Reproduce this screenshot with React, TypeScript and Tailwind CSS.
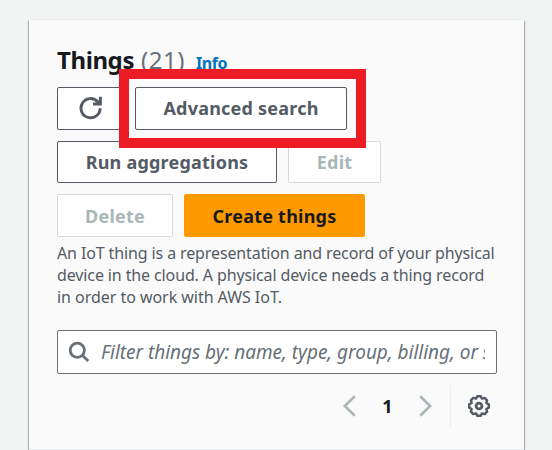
import type { ReactNode } from "react";

function Button({ className, children }: { className: string; children: ReactNode }) {
  return (
    <button
      className={`flex shrink-0 items-center justify-center whitespace-nowrap rounded-[2px] border text-[18px] font-bold leading-[22px] tracking-[0.22px] ${className}`}
    >
      {children}
    </button>
  );
}

const normal = "border-[#545b64] bg-white text-[#545b64]";
const disabled = "border-[#d5dbdb] bg-white text-[#aab7b8]";

export default function App() {
  return (
    <div className="h-[450px] w-[552px] overflow-hidden bg-[#f2f3f3] pl-[29px] pt-[20px] font-['Noto_Sans','Open_Sans',sans-serif] text-[#545b64]">
      <main className="relative flex h-[430px] w-[495px] flex-col border-b border-[#eaeded] bg-[#fafafa] px-[28px] shadow-[0_-1px_0_0_#eaeded,1px_1px_1px_0_rgba(0,28,36,0.3),-1px_1px_1px_0_rgba(0,28,36,0.3)]">
        <header className="mt-[24px] flex h-[32px] items-baseline whitespace-nowrap leading-[32px]">
          <h1 className="text-[24px] font-bold tracking-[-0.4px] text-[#16191f]">Things</h1>
          <span className="ml-[7px] text-[24px] tracking-[0.5px] text-[#687078]">(21)</span>
          <a className="ml-[11px] text-[16px] font-bold tracking-[-0.4px] text-[#0073bb]">Info</a>
        </header>

        <div className="mt-[11px] flex flex-col gap-[11px]">
          <div className="flex h-[43px] gap-[11px]">
            <Button className={`w-[67px] pb-[2px] ${normal}`}>
              <svg width="26" height="26" viewBox="0 0 26 26" fill="none" stroke="#545b64" strokeWidth="2.9">
                <path d="M22.2 13.2A9.6 9.6 0 1 1 19.6 6.6L22 9" />
                <path d="M22.4 1.8V9H15" />
              </svg>
            </Button>
            <Button className={`w-[212px] pb-[2px] ${normal}`}>Advanced search</Button>
          </div>
          <div className="flex h-[42px] gap-[11px]">
            <Button className={`w-[220px] ${normal}`}>Run aggregations</Button>
            <Button className={`w-[93px] ${disabled}`}>Edit</Button>
          </div>
          <div className="flex h-[43px] gap-[11px]">
            <Button className={`w-[116px] ${disabled}`}>Delete</Button>
            <Button className="w-[181px] border-[#ff9900] bg-[#ff9900] text-[#16191f]">Create things</Button>
          </div>
        </div>

        <p className="mt-[5px] whitespace-nowrap text-[16px] leading-[22px] tracking-[-0.12px]">
          <span className="block">An IoT thing is a representation and record of your physical</span>
          <span className="block">device in the cloud. A physical device needs a thing record</span>
          <span className="block tracking-[-0.04px]">in order to work with AWS IoT.</span>
        </p>

        <div className="mt-[22px] flex h-[44px] w-[440px] shrink-0 items-center rounded-[2px] border border-[#687078] bg-white pl-[10px] pr-[11px]">
          <svg className="shrink-0" width="22" height="22" viewBox="0 0 22 22" fill="none" stroke="#687078" strokeWidth="2.8">
            <circle cx="9.3" cy="9.2" r="7.1" />
            <path d="M14.3 14.2L20.2 20" />
          </svg>
          <span className="ml-[11px] flex-1 overflow-hidden whitespace-nowrap text-[19px] italic leading-[28px] tracking-[-0.03px] text-[#687078]">
            Filter things by: name, type, group, billing, or searchable attribute
          </span>
        </div>

        <div className="mt-[11px] flex h-[42px] w-[440px] items-center justify-end">
          <svg width="14" height="22" viewBox="0 0 14 22" fill="none" stroke="#aab7b8" strokeWidth="2.6">
            <path d="M12.8 1.2L2.8 11L12.8 20.8" />
          </svg>
          <span className="w-[62px] pl-px text-center text-[18px] font-bold text-[#16191f]">1</span>
          <svg width="14" height="22" viewBox="0 0 14 22" fill="none" stroke="#aab7b8" strokeWidth="2.6">
            <path d="M2.2 1.2L12.2 11L2.2 20.8" />
          </svg>
          <div className="ml-[18px] h-[42px] w-px bg-[#eaeded]" />
          <svg className="ml-[16px] mr-[6px]" width="24" height="24" viewBox="0 0 24 24" fill="none" stroke="#545b64" strokeWidth="2.5">
            <path strokeLinejoin="round" d="M10.4 2.2H13.6L15 4.6L17.7 3.9L20.1 6.3L19.4 9L21.8 10.4V13.6L19.4 15L20.1 17.7L17.7 20.1L15 19.4L13.6 21.8H10.4L9 19.4L6.3 20.1L3.9 17.7L4.6 15L2.2 13.6V10.4L4.6 9L3.9 6.3L6.3 3.9L9 4.6Z" />
            <circle cx="12" cy="12" r="2.9" strokeWidth="2.8" />
          </svg>
        </div>

        <div className="pointer-events-none absolute left-[90px] top-[49px] h-[79px] w-[247px] border-[10px] border-[#ed1c24]" />
      </main>
    </div>
  );
}
